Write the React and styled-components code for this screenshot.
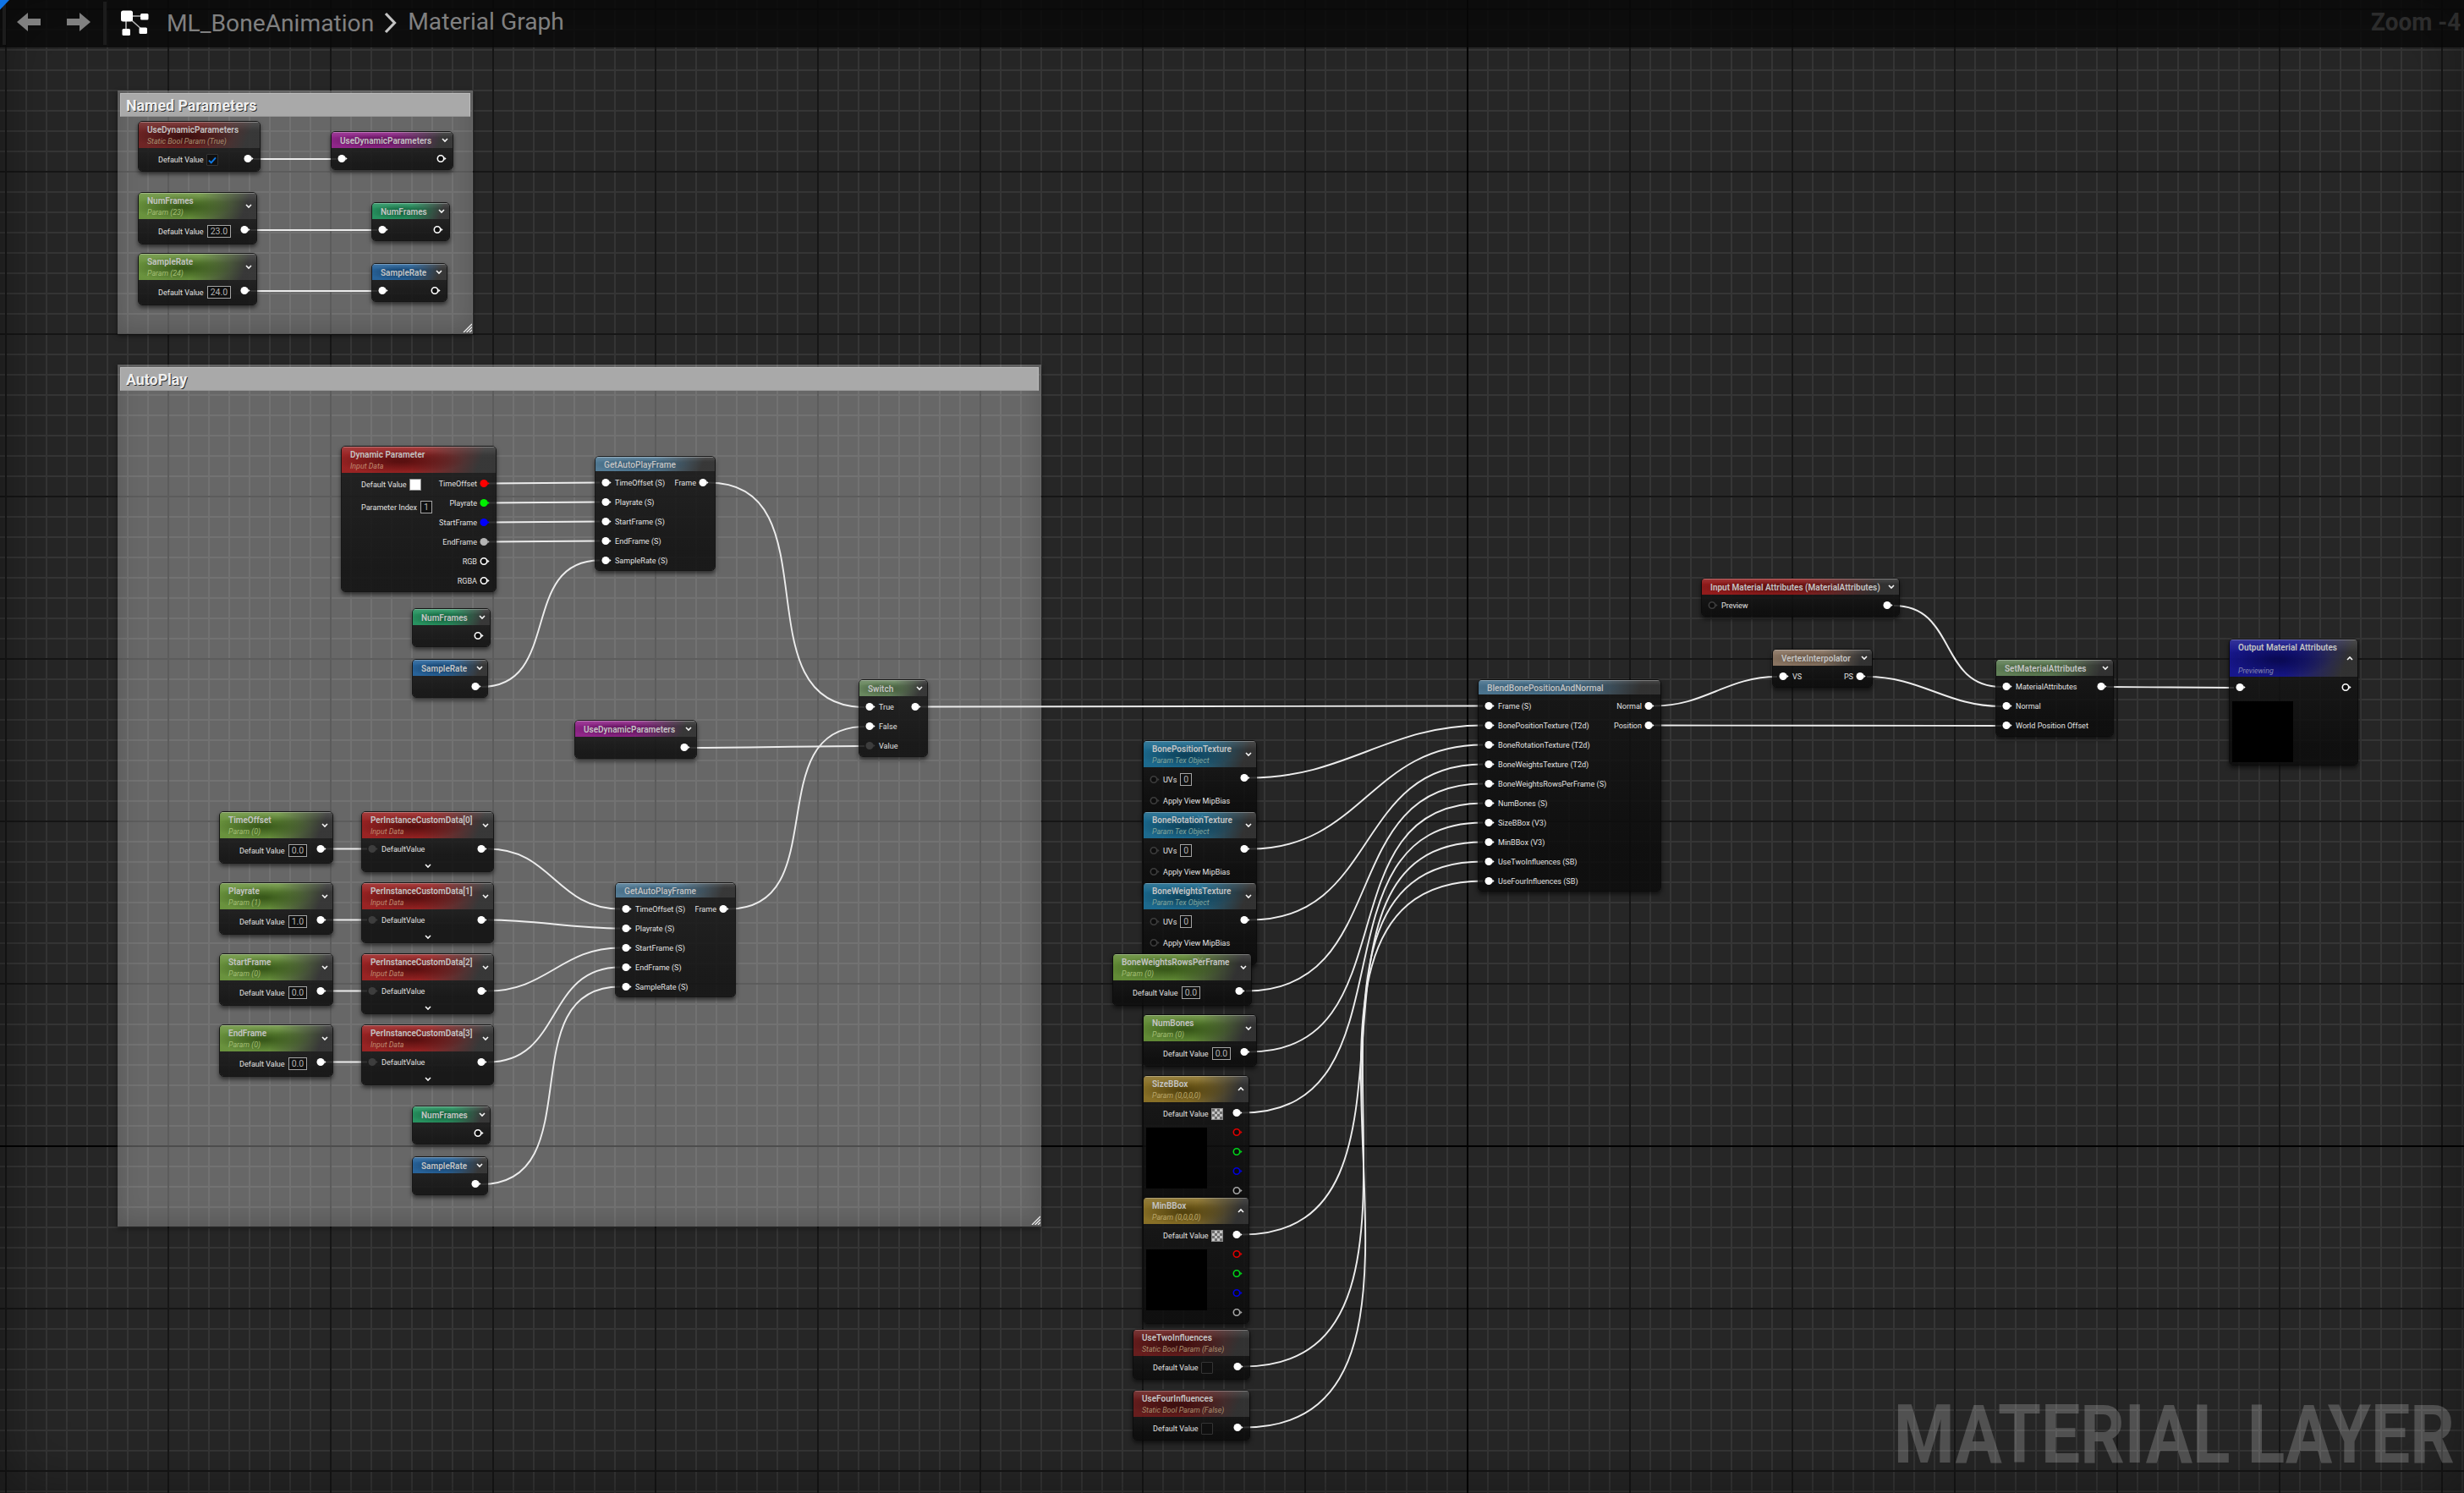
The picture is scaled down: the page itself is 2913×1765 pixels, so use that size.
import React from "react";
import styled, { createGlobalStyle, css } from "styled-components";

const Global = createGlobalStyle`
  *, *::before, *::after { box-sizing: border-box; }
  html, body { margin: 0; padding: 0; background: #262626; }
  body { width: 2913px; height: 1765px; overflow: hidden; }
`;

const Canvas = styled.main`
  position: relative;
  width: 2913px;
  height: 1765px;
  overflow: hidden;
  font-family: Roboto, "Liberation Sans", sans-serif;
  color: #dcdcdc;
  background-color: #262626;
  background-image:
    linear-gradient(90deg, #000 2px, transparent 2px),
    linear-gradient(180deg, #000 2px, transparent 2px),
    linear-gradient(90deg, #161616 2px, transparent 2px),
    linear-gradient(180deg, #161616 2px, transparent 2px),
    linear-gradient(90deg, #353535 2px, transparent 2px),
    linear-gradient(180deg, #353535 2px, transparent 2px);
  background-size: 2913px 1765px, 2913px 1765px, 192px 192px, 192px 192px, 24px 24px, 24px 24px;
  background-position: 1734px 0, 0 1354px, 6px 0, 0 10px, 6px 0, 0 10px;
  background-repeat: no-repeat, no-repeat, repeat, repeat, repeat, repeat;
`;

const Vignette = styled.div`
  position: absolute;
  inset: 0;
  pointer-events: none;
  box-shadow: inset 0 0 70px rgba(0, 0, 0, 0.42);
`;

/* ---------- comment boxes ---------- */

const Comment = styled.section`
  position: absolute;
  left: ${(p) => p.$x}px;
  top: ${(p) => p.$y}px;
  width: ${(p) => p.$w}px;
  height: ${(p) => p.$h}px;
  padding: 3px;
  background: rgba(255, 255, 255, 0.3);
  box-shadow: 0 2px 5px rgba(0, 0, 0, 0.5), inset 0 -6px 26px rgba(0, 0, 0, 0.16);
`;

const CommentTitle = styled.h2`
  display: flex;
  align-items: center;
  height: 28px;
  margin: 0;
  padding: 2px 0 0 6px;
  font-size: 17.8px;
  font-weight: 700;
  line-height: 1;
  color: #efefef;
  text-shadow: 1px 1px 0 rgba(20, 20, 20, 0.85);
  background: #a9a9a9;
  border: 1px solid #bcbcbc;
  border-bottom-color: #9a9a9a;
`;

const Grip = styled.svg`
  position: absolute;
  right: 1px;
  bottom: 2px;
`;

/* ---------- nodes ---------- */

const tones = {
  boolRed: ["#701c1c", "#330c0c", "#a89070"],
  red: ["#a01a1a", "#4c0c0c", "#bf8a70"],
  green: ["#6a9838", "#2f4d13", "#a3bf74"],
  magenta: ["#961d8e", "#520f4e", "#bbb"],
  teal: ["#1f985f", "#0f5433", "#bbb"],
  blue: ["#1f62a0", "#10385f", "#bbb"],
  steel: ["#507e9c", "#2d4d62", "#bbb"],
  sage: ["#698c5e", "#3c5434", "#bbb"],
  texture: ["#1b739c", "#0b3a50", "#84a69c"],
  gold: ["#967a27", "#483909", "#bba76a"],
  brown: ["#967e69", "#5f4e3f", "#bbb"],
  navy: ["#151599", "#07074a", "#8486b0"],
};

const headerHeights = { fn: 17, single: 19, double: 31, tall: 44 };

const NodeBox = styled.article`
  position: absolute;
  left: ${(p) => p.$x}px;
  top: ${(p) => p.$y}px;
  width: ${(p) => p.$w}px;
  height: ${(p) => p.$h}px;
  display: flex;
  flex-direction: column;
  border: 1px solid rgba(8, 8, 8, 0.85);
  border-radius: 5px;
  overflow: hidden;
  box-shadow: 0 3px 5px rgba(0, 0, 0, 0.55);
`;

const Header = styled.header`
  flex: none;
  display: flex;
  align-items: center;
  justify-content: space-between;
  height: ${(p) => headerHeights[p.$kind]}px;
  padding: 0 5px 0 10px;
  box-shadow: inset 0 1px 0 rgba(255, 255, 255, 0.28);
  ${(p) => {
    const [base, deep] = tones[p.$tone];
    return css`
      background:
        linear-gradient(180deg, rgba(255, 255, 255, 0.12), rgba(255, 255, 255, 0) 35%),
        radial-gradient(ellipse 42% 48% at 38% 55%, ${deep}d0 10%, transparent 100%),
        linear-gradient(112deg, ${base}e0 0%, ${base}e0 48%, #333333e8 88%);
    `;
  }}
`;

const Titles = styled.div`
  display: flex;
  flex-direction: column;
  justify-content: space-between;
  height: 100%;
  padding: ${(p) => ({ fn: "4px 0 0", single: "5px 0 0", double: "4px 0 3px", tall: "4px 0 2px" }[p.$kind])};
`;

const Title = styled.h3`
  margin: 0;
  font-size: ${(p) => (p.$light ? 10.15 : 10)}px;
  font-weight: ${(p) => (p.$light ? 500 : 600)};
  line-height: 11px;
  white-space: nowrap;
  color: #c4c4c4;
`;

const Subtitle = styled.span`
  font-size: 8.9px;
  font-style: italic;
  line-height: 10px;
  white-space: nowrap;
  color: ${(p) => tones[p.$tone][2]};
`;

const Body = styled.div`
  flex: 1;
  display: flex;
  justify-content: space-between;
  padding: ${(p) => (p.$kind === "fn" ? 2 : 1)}px 7px 0 7px;
  background: linear-gradient(180deg, rgba(20, 20, 20, 0.84), rgba(11, 11, 11, 0.84) 80%);
`;

const Column = styled.div`
  display: flex;
  flex-direction: column;
  align-items: ${(p) => (p.$end ? "flex-end" : "flex-start")};
`;

const PinRow = styled.div`
  display: flex;
  align-items: center;
  gap: ${(p) => (p.$end ? 3 : 4)}px;
  height: 23px;
`;

const PropRow = styled.div`
  display: flex;
  align-items: center;
  gap: ${(p) => (p.$compact ? 3 : 4)}px;
  height: ${(p) => (p.$compact ? 26 : 27)}px;
  padding-left: ${(p) => (p.$indent ? 16 : 0)}px;
`;

const Label = styled.span`
  position: relative;
  top: ${(p) => (p.$raised ? 0 : 1)}px;
  font-size: 9.05px;
  line-height: 11px;
  white-space: nowrap;
  color: #e2e2e2;
`;

const NumberInput = styled.span`
  display: flex;
  align-items: center;
  height: 15px;
  padding: 1px 3px 0;
  border: 1px solid #a4a4a4;
  font-size: 10.5px;
  line-height: 12px;
  color: #b2b2b2;
  background: #0f0f0f;
`;

const CheckBox = styled.span`
  display: flex;
  align-items: center;
  justify-content: center;
  width: 14px;
  height: 14px;
  border: 1px solid #343434;
  border-radius: 1px;
  background: #101010;
`;

const Swatch = styled.span`
  width: 14px;
  height: 14px;
  border: 1px solid #8a8a8a;
  background: ${(p) =>
    p.$checker ? "repeating-conic-gradient(#c4c4c4 0 25%, #6e6e6e 0 50%) 0 0 / 6px 6px" : "#fff"};
`;

const Preview = styled.div`
  width: 72px;
  height: 72px;
  margin: ${(p) => p.$top}px 0 0 -4px;
  background: #000;
`;

const Footer = styled.footer`
  flex: none;
  display: flex;
  justify-content: center;
  align-items: center;
  height: ${(p) => p.$h}px;
  background: rgba(11, 11, 11, 0.84);
`;

const Layer = styled.svg`
  position: absolute;
  inset: 0;
`;

function Chevron({ up }) {
  return (
    <svg width="8" height="7" viewBox="0 0 8 7">
      <path
        d={up ? "M1 5 L4 2 L7 5" : "M1 2 L4 5 L7 2"}
        fill="none"
        stroke="#f4f4f4"
        strokeWidth="1.6"
      />
    </svg>
  );
}

function Pin({ color = "#fff", open, dim }) {
  const c = dim ? "#3d3d3d" : color;
  return (
    <svg width="12" height="11" viewBox="0 0 12 11">
      <path d="M9.3 3.4 L11.6 5.5 L9.3 7.6 Z" fill={c} />
      {open ? (
        <circle cx="5" cy="5.5" r="3.7" fill="#0c0c0c" stroke={c} strokeWidth="1.6" />
      ) : (
        <circle cx="5" cy="5.5" r="4.5" fill={c} />
      )}
    </svg>
  );
}

function Control({ type, value }) {
  if (type === "number") return <NumberInput>{value}</NumberInput>;
  if (type === "check")
    return (
      <CheckBox>
        {value && (
          <svg width="10" height="9" viewBox="0 0 10 9">
            <path d="M1 4.6 L3.7 7.3 L9 1.3" fill="none" stroke="#0f7be8" strokeWidth="1.9" />
          </svg>
        )}
      </CheckBox>
    );
  return <Swatch $checker={value === "alpha"} />;
}

function GraphNode({ node }) {
  const { x, y, w, h, tone, kind, title, sub, chev, left = [], right = [], footer } = node;
  return (
    <NodeBox $x={x} $y={y} $w={w} $h={h}>
      <Header $kind={kind} $tone={tone}>
        <Titles $kind={kind}>
          <Title $light={kind === "fn"}>{title}</Title>
          {sub && <Subtitle $tone={tone}>{sub}</Subtitle>}
        </Titles>
        {chev && <Chevron up={chev === "up"} />}
      </Header>
      <Body $kind={kind}>
        <Column>
          {left.map((r, i) => {
            if (r.preview) return <Preview key={i} $top={r.preview} />;
            if (r.type)
              return (
                <PropRow key={i} $indent={!r.pin} $compact={r.type !== "number"}>
                  {r.pin && <Pin {...r.pin} />}
                  <Label $raised={r.type !== "number"}>{r.label}</Label>
                  <Control type={r.type} value={r.value} />
                </PropRow>
              );
            return (
              <PinRow key={i}>
                <Pin {...r.pin} />
                {r.label && <Label>{r.label}</Label>}
              </PinRow>
            );
          })}
        </Column>
        <Column $end>
          {right.map((r, i) => (
            <PinRow key={i} $end>
              {r.label && <Label>{r.label}</Label>}
              <Pin {...r.pin} />
            </PinRow>
          ))}
        </Column>
      </Body>
      {footer && (
        <Footer $h={footer}>
          <Chevron />
        </Footer>
      )}
    </NodeBox>
  );
}

/* ---------- graph data ---------- */

const solid = { pin: {} };
const hollow = { pin: { open: true } };
const input = (label, pin = {}) => ({ label, pin });
const number = (value, label = "Default Value") => ({ type: "number", label, value });

const param = (x, y, w, title, value, sub) => ({
  x, y, w, h: 62, tone: "green", kind: "double", title,
  sub: sub || "Param (0)", chev: "down", left: [number(value)], right: [solid],
});
const staticBool = (x, y, w, title, on) => ({
  x, y, w, h: 60, tone: "boolRed", kind: "double", title,
  sub: `Static Bool Param (${on ? "True" : "False"})`,
  left: [{ type: "check", label: "Default Value", value: on }], right: [solid],
});
const reroute = (x, y, w, tone, title, left, right) => ({
  x, y, w, h: 46, tone, kind: "single", title, chev: "down",
  left: left ? [left] : [], right: [right],
});
const autoPlayFrame = (x, y) => ({
  x, y, w: 143, h: 136, tone: "steel", kind: "fn", title: "GetAutoPlayFrame",
  left: ["TimeOffset (S)", "Playrate (S)", "StartFrame (S)", "EndFrame (S)", "SampleRate (S)"].map((l) => input(l)),
  right: [{ label: "Frame", pin: {} }],
});
const instanceData = (y, i) => ({
  x: 427, y, w: 157, h: 72, tone: "red", kind: "double", title: `PerInstanceCustomData[${i}]`,
  sub: "Input Data", chev: "down", left: [input("DefaultValue", { dim: true })], right: [solid], footer: 16,
});
const texture = (y, title) => ({
  x: 1351, y, w: 135, h: 98, tone: "texture", kind: "double", title, sub: "Param Tex Object", chev: "down",
  left: [
    { type: "number", label: "UVs", value: "0", pin: { dim: true, open: true } },
    input("Apply View MipBias", { dim: true, open: true }),
  ],
  right: [solid], footer: 14,
});
const vector = (y, title) => ({
  x: 1351, y, w: 126, h: 150, tone: "gold", kind: "double", title, sub: "Param (0,0,0,0)", chev: "up",
  left: [{ type: "swatch", label: "Default Value", value: "alpha" }, { preview: 3 }],
  right: [
    solid,
    { pin: { open: true, color: "#e00000" } },
    { pin: { open: true, color: "#00d41a" } },
    { pin: { open: true, color: "#0000e0" } },
    { pin: { open: true, color: "#a6a6a6" } },
  ],
});

const nodes = [
  staticBool(163, 143, 145, "UseDynamicParameters", true),
  reroute(391, 155, 145, "magenta", "UseDynamicParameters", solid, hollow),
  param(163, 227, 141, "NumFrames", "23.0", "Param (23)"),
  param(163, 299, 141, "SampleRate", "24.0", "Param (24)"),
  reroute(439, 239, 93, "teal", "NumFrames", solid, hollow),
  reroute(439, 311, 90, "blue", "SampleRate", solid, hollow),
  {
    x: 403, y: 527, w: 184, h: 173, tone: "red", kind: "double", title: "Dynamic Parameter", sub: "Input Data",
    left: [{ type: "swatch", label: "Default Value", value: "white" }, number("1", "Parameter Index")],
    right: [
      { label: "TimeOffset", pin: { color: "#ff0000" } },
      { label: "Playrate", pin: { color: "#00f000" } },
      { label: "StartFrame", pin: { color: "#0000ff" } },
      { label: "EndFrame", pin: { color: "#b4b4b4" } },
      { label: "RGB", pin: { open: true } },
      { label: "RGBA", pin: { open: true } },
    ],
  },
  autoPlayFrame(703, 539),
  reroute(487, 719, 93, "teal", "NumFrames", null, hollow),
  reroute(487, 779, 90, "blue", "SampleRate", null, solid),
  reroute(679, 851, 145, "magenta", "UseDynamicParameters", null, solid),
  {
    x: 1015, y: 803, w: 82, h: 92, tone: "sage", kind: "single", title: "Switch", chev: "down",
    left: [input("True"), input("False"), input("Value", { dim: true })], right: [solid],
  },
  param(259, 959, 135, "TimeOffset", "0.0"),
  param(259, 1043, 135, "Playrate", "1.0", "Param (1)"),
  param(259, 1127, 135, "StartFrame", "0.0"),
  param(259, 1211, 135, "EndFrame", "0.0"),
  instanceData(959, 0),
  instanceData(1043, 1),
  instanceData(1127, 2),
  instanceData(1211, 3),
  autoPlayFrame(727, 1043),
  reroute(487, 1307, 93, "teal", "NumFrames", null, hollow),
  reroute(487, 1367, 90, "blue", "SampleRate", null, solid),
  texture(875, "BonePositionTexture"),
  texture(959, "BoneRotationTexture"),
  texture(1043, "BoneWeightsTexture"),
  param(1315, 1127, 165, "BoneWeightsRowsPerFrame", "0.0"),
  param(1351, 1199, 135, "NumBones", "0.0"),
  vector(1271, "SizeBBox"),
  vector(1415, "MinBBox"),
  staticBool(1339, 1571, 139, "UseTwoInfluences", false),
  staticBool(1339, 1643, 139, "UseFourInfluences", false),
  {
    x: 1747, y: 803, w: 217, h: 251, tone: "steel", kind: "fn", title: "BlendBonePositionAndNormal",
    left: [
      "Frame (S)", "BonePositionTexture (T2d)", "BoneRotationTexture (T2d)", "BoneWeightsTexture (T2d)",
      "BoneWeightsRowsPerFrame (S)", "NumBones (S)", "SizeBBox (V3)", "MinBBox (V3)",
      "UseTwoInfluences (SB)", "UseFourInfluences (SB)",
    ].map((l) => input(l)),
    right: [{ label: "Normal", pin: {} }, { label: "Position", pin: {} }],
  },
  {
    x: 2011, y: 683, w: 235, h: 46, tone: "red", kind: "single",
    title: "Input Material Attributes (MaterialAttributes)", chev: "down",
    left: [input("Preview", { dim: true, open: true })], right: [solid],
  },
  {
    x: 2095, y: 767, w: 119, h: 46, tone: "brown", kind: "single", title: "VertexInterpolator", chev: "down",
    left: [input("VS")], right: [{ label: "PS", pin: {} }],
  },
  {
    x: 2359, y: 779, w: 140, h: 92, tone: "sage", kind: "single", title: "SetMaterialAttributes", chev: "down",
    left: [input("MaterialAttributes"), input("Normal"), input("World Position Offset")], right: [solid],
  },
  {
    x: 2635, y: 755, w: 153, h: 150, tone: "navy", kind: "tall", title: "Output Material Attributes",
    sub: "Previewing", chev: "up", left: [solid, { preview: 5 }], right: [hollow],
  },
];

const wires = [
  [300, 188, 398, 188],
  [296, 272, 446, 272],
  [296, 344, 446, 344],
  [578, 571.5, 709, 570.5],
  [578, 594.5, 709, 593.5],
  [578, 617.5, 709, 616.5],
  [578, 640.5, 709, 639.5],
  [569, 812, 709, 662.5],
  [838, 570.5, 1022, 836],
  [816, 884, 1022, 882],
  [862, 1074.5, 1022, 859],
  [1089, 835.5, 1753, 834.5],
  [386, 1003.5, 434, 1003.5],
  [386, 1087.5, 434, 1087.5],
  [386, 1171.5, 434, 1171.5],
  [386, 1255.5, 434, 1255.5],
  [577, 1003.5, 733, 1074.5],
  [577, 1087.5, 733, 1097.5],
  [577, 1171.5, 733, 1120.5],
  [577, 1255.5, 733, 1143.5],
  [569, 1400, 733, 1166.5],
  [1478, 919.5, 1753, 857.5],
  [1478, 1003.5, 1753, 880.5],
  [1478, 1087.5, 1753, 903.5],
  [1473, 1171.5, 1753, 926.5],
  [1478, 1243.5, 1753, 949.5],
  [1469, 1315.5, 1753, 972.5],
  [1469, 1459.5, 1753, 995.5],
  [1470, 1615.5, 1753, 1018.5],
  [1470, 1687.5, 1753, 1041.5],
  [1956, 834.5, 2101, 800],
  [1956, 857.5, 2366, 858],
  [2239, 716, 2366, 812],
  [2207, 800, 2366, 835],
  [2491, 812, 2641, 813],
];

function wirePath([x1, y1, x2, y2]) {
  const handle = (Math.abs(x2 - x1) + Math.abs(y2 - y1)) / 3;
  return `M${x1} ${y1} C${x1 + handle} ${y1} ${x2 - handle} ${y2} ${x2} ${y2}`;
}

/* ---------- top bar ---------- */

const TopBar = styled.nav`
  position: relative;
  display: flex;
  align-items: flex-start;
  height: 56px;
  background: rgba(8, 8, 8, 0.8);
  color: #808080;
`;

const Corner = styled.svg`
  position: absolute;
  left: 0;
  top: 0;
`;

const Divider = styled.span`
  width: 4px;
  height: 51px;
  margin: 2px 0 0 ${(p) => p.$gap}px;
  background: #1c1c1c;
`;

const BarIcon = styled.svg`
  margin: ${(p) => p.$top}px 0 0 ${(p) => p.$gap}px;
`;

const Crumb = styled.span`
  font-size: 28.2px;
  line-height: 32px;
  white-space: nowrap;
  margin: ${(p) => p.$top}px 0 0 ${(p) => p.$gap}px;
`;

const ZoomLevel = styled.span`
  margin: 8px 4px 0 auto;
  font-size: 30px;
  font-weight: 700;
  line-height: 35px;
  white-space: nowrap;
  color: #2c2c2c;
  transform: scaleX(0.93);
  transform-origin: right center;
`;

const Watermark = styled.div`
  position: absolute;
  right: 11px;
  bottom: 12px;
  font-size: 97px;
  font-weight: 700;
  line-height: 114px;
  white-space: nowrap;
  color: rgba(255, 255, 255, 0.2);
  transform: scaleX(0.848);
  transform-origin: right center;
`;

export default function App() {
  return (
    <Canvas>
      <Global />
      <Comment $x={139} $y={107} $w={420} $h={288}>
        <CommentTitle>Named Parameters</CommentTitle>
        <Grip width="11" height="11" viewBox="0 0 11 11">
          <path d="M1 11 L11 1 M4.5 11 L11 4.5 M8 11 L11 8" stroke="#eee" strokeWidth="1.3" />
        </Grip>
      </Comment>
      <Comment $x={139} $y={431} $w={1092} $h={1019}>
        <CommentTitle>AutoPlay</CommentTitle>
        <Grip width="11" height="11" viewBox="0 0 11 11">
          <path d="M1 11 L11 1 M4.5 11 L11 4.5 M8 11 L11 8" stroke="#eee" strokeWidth="1.3" />
        </Grip>
      </Comment>
      <Layer width="2913" height="1765">
        {wires.map((w, i) => (
          <path key={i} d={wirePath(w)} fill="none" stroke="#ececec" strokeWidth="1.9" />
        ))}
      </Layer>
      {nodes.map((n, i) => (
        <GraphNode key={i} node={n} />
      ))}
      <Vignette />
      <TopBar>
        <Corner width="11" height="12" viewBox="0 0 11 12">
          <path d="M0 0 H11 L0 11.5 Z" fill="#0f74e6" />
        </Corner>
        <Divider $gap={3} />
        <BarIcon $top={14} $gap={13} width="29" height="24" viewBox="0 0 29 24">
          <path d="M0 12 L13 1 V8 H28 V16 H13 V23 Z" fill="#808080" />
        </BarIcon>
        <BarIcon $top={14} $gap={30} width="29" height="24" viewBox="0 0 29 24">
          <path d="M28 12 L15 1 V8 H0 V16 H15 V23 Z" fill="#808080" />
        </BarIcon>
        <Divider $gap={14} />
        <BarIcon $top={12} $gap={16} width="34" height="31" viewBox="0 0 34 31">
          <path d="M8 7 H29 M7 7 V25 M8 7 L27 24" stroke="#b5b5b5" strokeWidth="1.6" fill="none" />
          <rect x="1" y="0.5" width="14" height="13" rx="2.5" fill="#fff" />
          <rect x="24" y="4" width="9.5" height="7.5" rx="1.5" fill="#fff" />
          <rect x="2.5" y="22" width="9.5" height="8" rx="1.5" fill="#fff" />
          <rect x="22.5" y="20.5" width="9.5" height="7.5" rx="1.5" fill="#fff" />
        </BarIcon>
        <Crumb $top={12} $gap={21}>ML_BoneAnimation</Crumb>
        <BarIcon $top={14} $gap={11} width="18" height="26" viewBox="0 0 18 26">
          <path d="M3 2 L13.5 13 L3 24" stroke="#c4c4c4" strokeWidth="3.2" fill="none" />
        </BarIcon>
        <Crumb $top={10} $gap={11}>Material Graph</Crumb>
        <ZoomLevel>Zoom -4</ZoomLevel>
      </TopBar>
      <Watermark>MATERIAL LAYER</Watermark>
    </Canvas>
  );
}
